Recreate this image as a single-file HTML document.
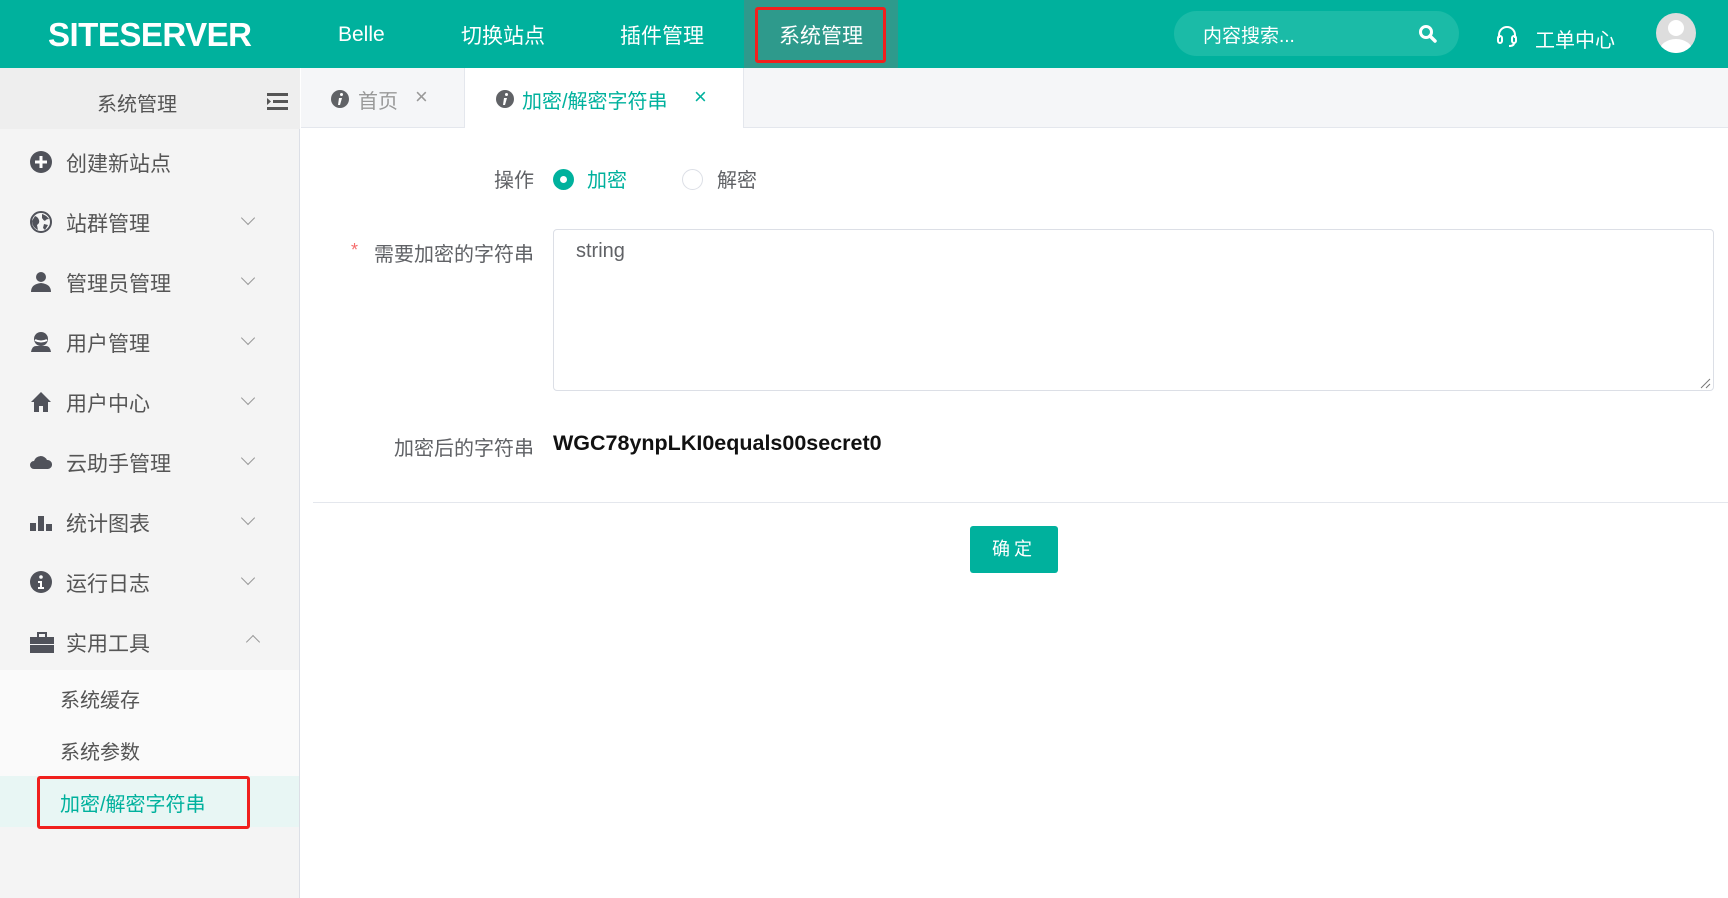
<!DOCTYPE html>
<html><head><meta charset="utf-8"><style>
*{box-sizing:border-box;margin:0;padding:0}
body{width:1728px;height:898px;overflow:hidden;background:#fff;font-family:"Liberation Sans","Noto Sans CJK SC",sans-serif;position:relative}
.a{position:absolute}
.hdr{left:0;top:0;width:1728px;height:68px;background:#00b19d}
.nav{color:#fff;font-size:21px;top:20px}
.side{left:0;top:68px;width:300px;height:830px;background:#f4f4f4;border-right:1px solid #dcdfe6}
.mi{left:66px;font-size:21px;color:#555}
.ic{left:30px;width:22px;height:22px}
.chev{left:243px;width:10px;height:10px;border-right:1.5px solid #999;border-bottom:1.5px solid #999;transform:rotate(45deg)}
.lbl{font-size:20px;color:#606266;text-align:right;width:300px}
</style></head><body>
<div class="a hdr"></div>
<div class="a" style="left:48px;top:16px;color:#fff;font-size:33px;font-weight:bold;letter-spacing:-0.5px;font-family:'Liberation Sans',sans-serif">SITESERVER</div>
<div class="a nav" style="left:338px;top:23px">Belle</div>
<div class="a nav" style="left:461px">切换站点</div>
<div class="a nav" style="left:620px">插件管理</div>
<div class="a" style="left:744px;top:0;width:154px;height:68px;background:#2e9a8c"></div>
<div class="a" style="left:755px;top:7px;width:131px;height:56px;border:3px solid #f0201d;border-radius:3px"></div>
<div class="a nav" style="left:779px">系统管理</div>
<div class="a" style="left:1174px;top:11px;width:285px;height:45px;border-radius:23px;background:#1bbba7"></div>
<div class="a" style="left:1203px;top:21px;color:#fff;font-size:19px">内容搜索...</div>
<svg class="a" style="left:1418px;top:24px" width="20" height="20" viewBox="0 0 20 20"><circle cx="8" cy="8" r="5.5" fill="none" stroke="#fff" stroke-width="3"/><path d="M12 12l5 5" stroke="#fff" stroke-width="3.5" stroke-linecap="round"/></svg>
<svg class="a" style="left:1496px;top:24px" width="22" height="24" viewBox="0 0 22 24"><path d="M3 14v-3a8 8 0 0 1 16 0v3" fill="none" stroke="#fff" stroke-width="2"/><rect x="2" y="12" width="4" height="7" rx="2" fill="none" stroke="#fff" stroke-width="2"/><rect x="16" y="12" width="4" height="7" rx="2" fill="none" stroke="#fff" stroke-width="2"/><path d="M18 19q0 3-5 3" fill="none" stroke="#fff" stroke-width="2"/></svg>
<div class="a" style="left:1535px;top:24px;color:#fff;font-size:20px">工单中心</div>
<svg class="a" style="left:1655px;top:12px" width="42" height="42" viewBox="0 0 42 42"><defs><clipPath id="c"><circle cx="21" cy="21" r="20"/></clipPath></defs><circle cx="21" cy="21" r="20" fill="#ddd"/><g clip-path="url(#c)" fill="#fff"><circle cx="21" cy="16" r="8"/><ellipse cx="21" cy="40" rx="17" ry="13"/></g></svg>

<div class="a side"></div>
<div class="a" style="left:0;top:68px;width:300px;height:61px;background:#eeeeee"></div>
<div class="a" style="left:97px;top:88px;font-size:20px;color:#555">系统管理</div>
<svg class="a" style="left:267px;top:93px" width="21" height="17" viewBox="0 0 21 17"><rect x="0" y="0" width="21" height="3" fill="#555"/><rect x="6" y="7" width="15" height="3" fill="#555"/><rect x="0" y="14" width="21" height="3" fill="#555"/><path d="M0 5l4 3.5-4 3.5z" fill="#555"/></svg>

<svg class="a ic" style="top:151px" viewBox="0 0 22 22"><circle cx="11" cy="11" r="11" fill="#50525a"/><path d="M11 5v12M5 11h12" stroke="#fff" stroke-width="3"/></svg>
<div class="a mi" style="top:148px">创建新站点</div>
<svg class="a ic" style="top:211px" viewBox="0 0 22 22"><circle cx="11" cy="11" r="10" fill="none" stroke="#50525a" stroke-width="2"/><path d="M5 5q3 1 4 4t-2 5l1 5q-6-3-6-9zM12 3q4 1 7 5-3 0-4 2-2-1-3-3zM14 13l4 1-3 5-2-2z" fill="#50525a"/></svg>
<div class="a mi" style="top:208px">站群管理</div><div class="a chev" style="top:213px"></div>
<svg class="a ic" style="top:271px" viewBox="0 0 22 22"><circle cx="11" cy="6" r="5" fill="#50525a"/><path d="M1 21q0-8 10-9 10 1 10 9z" fill="#50525a"/></svg>
<div class="a mi" style="top:268px">管理员管理</div><div class="a chev" style="top:273px"></div>
<svg class="a ic" style="top:331px" viewBox="0 0 22 22"><circle cx="11" cy="8" r="7" fill="#50525a"/><path d="M5 9q6 3 12 0" stroke="#fff" stroke-width="2" fill="none"/><path d="M1 21q1-6 5-6h10q4 0 5 6z" fill="#50525a"/></svg>
<div class="a mi" style="top:328px">用户管理</div><div class="a chev" style="top:333px"></div>
<svg class="a ic" style="top:391px" viewBox="0 0 22 22"><path d="M11 1l10 10h-3v10h-5v-6h-4v6h-5v-10h-3z" fill="#50525a"/></svg>
<div class="a mi" style="top:388px">用户中心</div><div class="a chev" style="top:393px"></div>
<svg class="a ic" style="top:451px" viewBox="0 0 22 22"><path d="M4 18a4 4 0 0 1 0-8 7 7 0 0 1 13-1 4.5 4.5 0 0 1 1 9z" fill="#50525a"/></svg>
<div class="a mi" style="top:448px">云助手管理</div><div class="a chev" style="top:453px"></div>
<svg class="a ic" style="top:511px" viewBox="0 0 22 22"><rect x="0" y="12" width="6" height="8" fill="#50525a"/><rect x="8" y="5" width="6" height="15" fill="#50525a"/><rect x="16" y="13" width="6" height="7" fill="#50525a"/></svg>
<div class="a mi" style="top:508px">统计图表</div><div class="a chev" style="top:513px"></div>
<svg class="a ic" style="top:571px" viewBox="0 0 22 22"><circle cx="11" cy="11" r="11" fill="#50525a"/><circle cx="11" cy="6" r="1.8" fill="#fff"/><path d="M8 10h4v6h2v2h-6v-2h2v-4h-2z" fill="#fff"/></svg>
<div class="a mi" style="top:568px">运行日志</div><div class="a chev" style="top:573px"></div>
<svg class="a ic" style="top:632px;width:24px" viewBox="0 0 24 22"><rect x="8" y="1" width="8" height="5" fill="none" stroke="#50525a" stroke-width="2"/><rect x="0" y="5" width="24" height="7" fill="#50525a"/><rect x="0" y="13" width="24" height="8" fill="#50525a"/></svg>
<div class="a mi" style="top:628px">实用工具</div>
<div class="a" style="left:248px;top:637px;width:10px;height:10px;border-left:1.5px solid #999;border-top:1.5px solid #999;transform:rotate(45deg)"></div>
<div class="a" style="left:0;top:670px;width:299px;height:106px;background:#fafafa"></div>
<div class="a" style="left:0;top:776px;width:299px;height:51px;background:#e8f6f4"></div>
<div class="a" style="left:60px;top:684px;font-size:20px;color:#555">系统缓存</div>
<div class="a" style="left:60px;top:736px;font-size:20px;color:#555">系统参数</div>
<div class="a" style="left:37px;top:776px;width:213px;height:53px;border:3px solid #f0201d;border-radius:3px"></div>
<div class="a" style="left:60px;top:788px;font-size:20px;color:#00b19d">加密/解密字符串</div>

<div class="a" style="left:301px;top:68px;width:1427px;height:60px;background:#f5f6f8;border-bottom:1px solid #e4e7ed"></div>
<div class="a" style="left:464px;top:68px;width:280px;height:60px;background:#fff;border-left:1px solid #e4e7ed;border-right:1px solid #e4e7ed"></div>
<svg class="a" style="left:331px;top:90px" width="18" height="18" viewBox="0 0 18 18"><circle cx="9" cy="9" r="9" fill="#606266"/><circle cx="10.5" cy="4.5" r="1.5" fill="#fff"/><path d="M8 8h3l-2 7h-2z" fill="#fff"/></svg>
<div class="a" style="left:358px;top:85px;font-size:20px;color:#999">首页</div>
<div class="a" style="left:415px;top:84px;font-size:22px;color:#999">×</div>
<svg class="a" style="left:496px;top:90px" width="18" height="18" viewBox="0 0 18 18"><circle cx="9" cy="9" r="9" fill="#606266"/><circle cx="10.5" cy="4.5" r="1.5" fill="#fff"/><path d="M8 8h3l-2 7h-2z" fill="#fff"/></svg>
<div class="a" style="left:522px;top:85px;font-size:20px;color:#00b19d">加密/解密字符串</div>
<div class="a" style="left:694px;top:84px;font-size:22px;color:#00b19d">×</div>

<div class="a lbl" style="left:234px;top:164px">操作</div>
<div class="a" style="left:553px;top:169px;width:21px;height:21px;border-radius:50%;background:#00b19d"></div>
<div class="a" style="left:560px;top:176px;width:7px;height:7px;border-radius:50%;background:#fff"></div>
<div class="a" style="left:587px;top:164px;font-size:20px;color:#00b19d">加密</div>
<div class="a" style="left:682px;top:169px;width:21px;height:21px;border-radius:50%;border:1px solid #dcdfe6"></div>
<div class="a" style="left:717px;top:164px;font-size:20px;color:#606266">解密</div>
<div class="a" style="left:351px;top:240px;font-size:18px;color:#f56c6c">*</div>
<div class="a lbl" style="left:234px;top:238px">需要加密的字符串</div>
<div class="a" style="left:553px;top:229px;width:1161px;height:162px;border:1px solid #dcdfe6;border-radius:4px"></div>
<div class="a" style="left:576px;top:240px;font-size:20px;color:#606266">string</div>
<svg class="a" style="left:1699px;top:377px" width="12" height="12"><path d="M2 11L11 2M7 11L11 7" stroke="#777" stroke-width="1"/></svg>
<div class="a lbl" style="left:234px;top:432px">加密后的字符串</div>
<div class="a" style="left:553px;top:431px;font-size:21.5px;font-weight:bold;color:#111">WGC78ynpLKI0equals00secret0</div>
<div class="a" style="left:313px;top:502px;width:1415px;height:1px;background:#e4e7ed"></div>
<div class="a" style="left:970px;top:526px;width:88px;height:47px;background:#00b19d;border-radius:3px;color:#fff;font-size:18px;text-align:center;line-height:47px;letter-spacing:4px">确定</div>
</body></html>
